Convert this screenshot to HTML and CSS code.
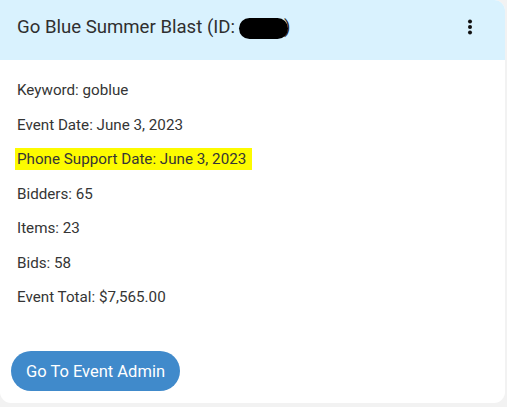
FILE: index.html
```html
<!DOCTYPE html>
<html>
<head>
<meta charset="utf-8">
<link rel="stylesheet" href="styles.css">
</head>
<body>
<div class="card">
  <div class="card-header">
    <h2 class="title">Go Blue Summer Blast (ID: <span class="redact"></span><span class="paren">)</span></h2>
    <button class="menu" aria-label="menu">
      <svg width="6" height="16" viewBox="0 0 6 16"><circle cx="3" cy="2.5" r="2"/><circle cx="3" cy="8" r="2"/><circle cx="3" cy="13.5" r="2"/></svg>
    </button>
  </div>
  <div class="card-body">
    <div class="info">
      <p>Keyword: goblue</p>
      <p>Event Date: June 3, 2023</p>
      <p><span class="hl">Phone Support Date: June 3, 2023</span></p>
      <p>Bidders: 65</p>
      <p>Items: 23</p>
      <p>Bids: 58</p>
      <p>Event Total: $7,565.00</p>
    </div>
    <button class="admin">Go To Event Admin</button>
  </div>
</div>
</body>
</html>
```

FILE: styles.css
```css
html, body {
  margin: 0;
  padding: 0;
}
body {
  background: #f2f2f2;
  font-family: Roboto, "Liberation Sans", sans-serif;
  width: 507px;
  height: 407px;
  overflow: hidden;
}
.card {
  width: 505px;
  height: 403px;
  background: #ffffff;
  border-radius: 0 11px 11px 11px;
  overflow: hidden;
  display: flex;
  flex-direction: column;
}
.card-header {
  height: 60px;
  background: #d9f2fe;
  display: flex;
  align-items: center;
  justify-content: space-between;
  padding: 0 32px 0 17px;
  flex-shrink: 0;
  box-sizing: border-box;
}
.title {
  margin: 0;
  font-size: 18.6px;
  font-weight: 400;
  color: #2f2f2f;
  display: flex;
  align-items: center;
  position: relative;
  top: -3px;
}
.redact {
  display: inline-block;
  width: 49px;
  height: 21px;
  background: #000;
  border-radius: 11px;
  margin-left: 4px;
  position: relative;
  z-index: 1;
  top: 1px;
}
.paren {
  margin-left: -4px;
}
.menu {
  border: none;
  background: none;
  padding: 0;
  display: flex;
  position: relative;
  top: -3px;
}
.menu svg {
  fill: #111;
}
.card-body {
  flex: 1;
  display: flex;
  flex-direction: column;
  padding: 20px 0 12px 11px;
}
.info {
  display: flex;
  flex-direction: column;
  gap: 14.5px;
  padding-left: 6px;
}
.info p {
  margin: 0;
  font-size: 15.2px;
  line-height: 20px;
  color: #353535;
}
.hl {
  background: #fdfb00;
  padding: 2px 6px 2px 2px;
  margin-left: -2px;
}
.admin {
  margin-top: auto;
  width: 169px;
  height: 40px;
  border: none;
  border-radius: 20px;
  background: #408acb;
  color: #ffffff;
  font-family: Roboto, "Liberation Sans", sans-serif;
  font-size: 16.5px;
  padding: 0;
}
```
